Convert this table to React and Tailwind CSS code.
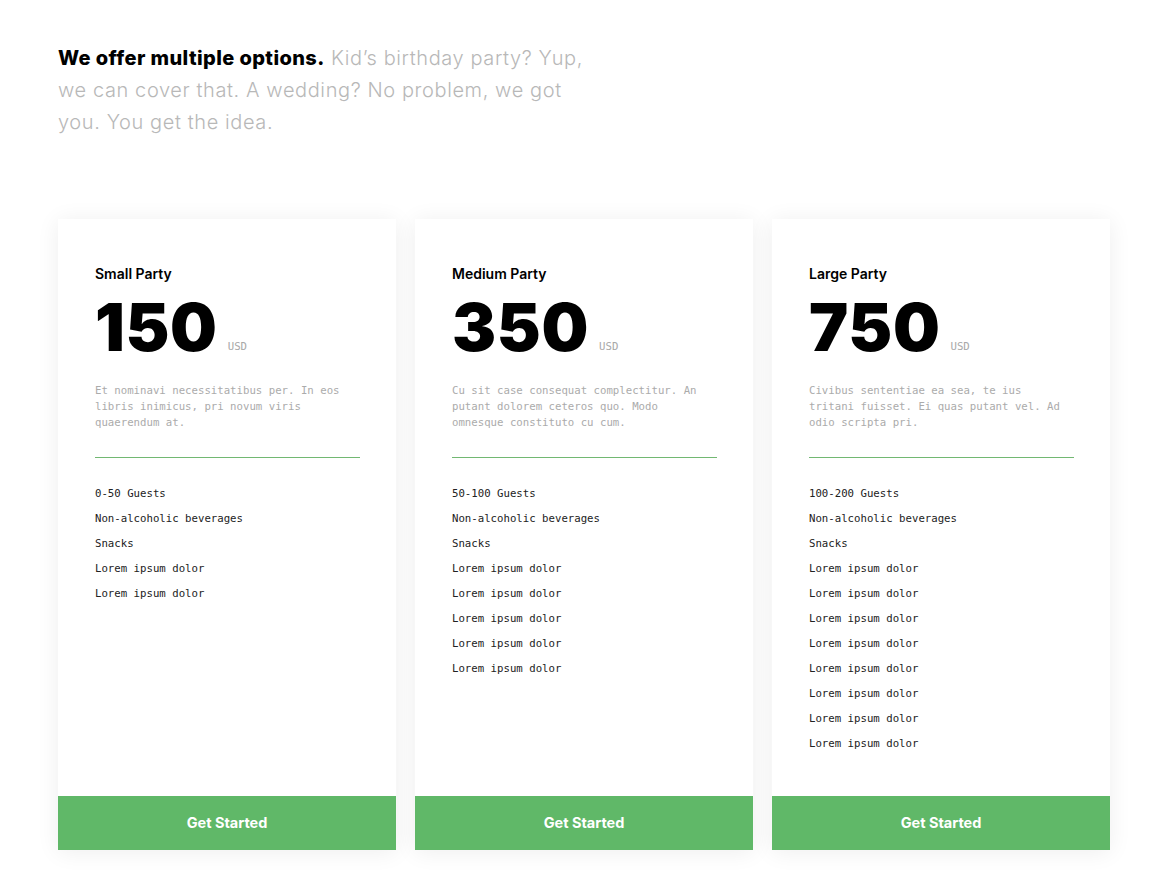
import React from "react";

const plans = [
  {
    name: "Small Party",
    price: "150",
    desc: "Et nominavi necessitatibus per. In eos libris inimicus, pri novum viris quaerendum at.",
    features: ["0-50 Guests", "Non-alcoholic beverages", "Snacks", "Lorem ipsum dolor", "Lorem ipsum dolor"],
  },
  {
    name: "Medium Party",
    price: "350",
    desc: "Cu sit case consequat complectitur. An putant dolorem ceteros quo. Modo omnesque constituto cu cum.",
    features: [
      "50-100 Guests",
      "Non-alcoholic beverages",
      "Snacks",
      "Lorem ipsum dolor",
      "Lorem ipsum dolor",
      "Lorem ipsum dolor",
      "Lorem ipsum dolor",
      "Lorem ipsum dolor",
    ],
  },
  {
    name: "Large Party",
    price: "750",
    desc: "Civibus sententiae ea sea, te ius tritani fuisset. Ei quas putant vel. Ad odio scripta pri.",
    features: [
      "100-200 Guests",
      "Non-alcoholic beverages",
      "Snacks",
      "Lorem ipsum dolor",
      "Lorem ipsum dolor",
      "Lorem ipsum dolor",
      "Lorem ipsum dolor",
      "Lorem ipsum dolor",
      "Lorem ipsum dolor",
      "Lorem ipsum dolor",
      "Lorem ipsum dolor",
    ],
  },
];

const sans = "font-['Inter','Noto_Sans',sans-serif]";
const mono = "font-['DejaVu_Sans_Mono','Liberation_Mono',monospace]";

function Card({ plan }) {
  return (
    <div className="flex flex-col bg-white shadow-[0_2px_22px_rgba(0,0,0,0.07)]">
      <div className="flex-1 pl-[37px] pr-[36px] pt-[45px] pb-[40px]">
        <div className={`${sans} text-[14px] leading-[20px] font-semibold text-black`}>{plan.name}</div>
        <div className="mt-[15px] flex items-end">
          <span className={`${sans} text-[66px] leading-[56px] font-black tracking-[0.01em] text-black`}>
            {plan.price}
          </span>
          <span className={`${mono} ml-[10px] mb-[1px] text-[10.7px] leading-[14px] text-[#a8a8a8]`}>USD</span>
        </div>
        <p className={`${mono} mt-[28px] w-[252px] text-[10.7px] leading-[16px] text-[#ababab]`}>{plan.desc}</p>
        <div className="mt-[26px] h-px bg-[#72b872]" />
        <ul className={`${mono} mt-[23px] text-[10.7px] leading-[25px] text-[#222]`}>
          {plan.features.map((f, i) => (
            <li key={i}>{f}</li>
          ))}
        </ul>
      </div>
      <button className={`${sans} h-[54px] w-full bg-[#60b868] text-[14.5px] font-bold text-white`}>
        Get Started
      </button>
    </div>
  );
}

export default function App() {
  return (
    <div className="min-h-screen bg-white px-[58px] pt-[42px] pb-[39px]">
      <p
        className={`${sans} max-w-[540px] text-[20px] leading-[32px] font-light tracking-[0.03em] text-[#b8b8b8]`}
      >
        <span className="font-extrabold tracking-[0.02em] text-black">We offer multiple options.</span> Kid’s
        birthday party? Yup, we can cover that. A wedding? No problem, we got you. You get the idea.
      </p>
      <div className="mt-[81px] grid w-[1052px] grid-cols-3 gap-[19px]">
        {plans.map((p) => (
          <Card key={p.name} plan={p} />
        ))}
      </div>
    </div>
  );
}
